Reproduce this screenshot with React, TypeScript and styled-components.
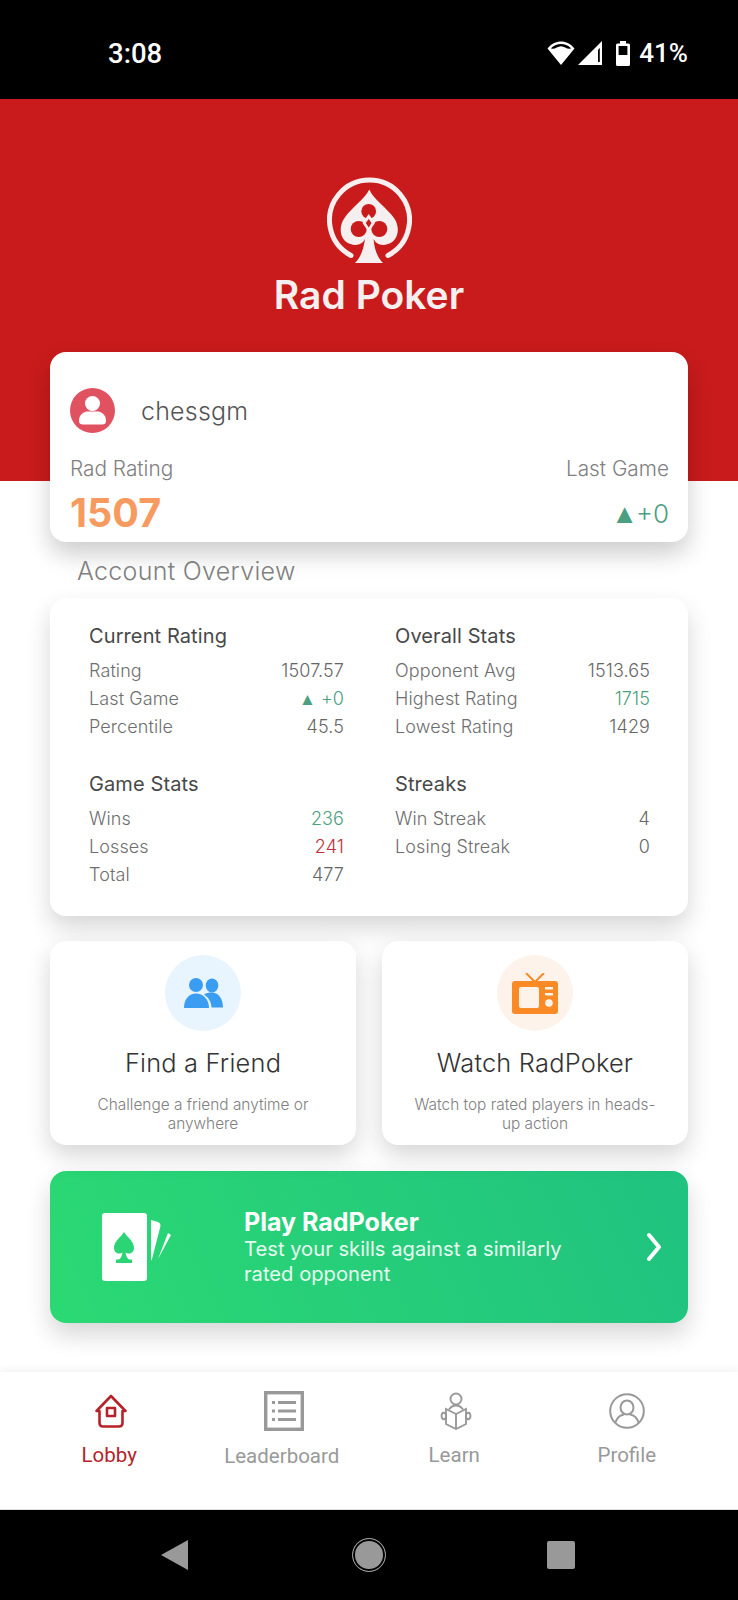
import React from "react";
import styled, { createGlobalStyle } from "styled-components";

const GlobalStyle = createGlobalStyle`
  html, body {
    margin: 0;
    padding: 0;
    background: #fff;
    font-family: Inter, "Liberation Sans", sans-serif;
  }
  * {
    box-sizing: border-box;
  }
`;

const colors = {
  red: "#c91b1c",
  navRed: "#b5232a",
  green: "#4a9f7e",
  lossRed: "#c0303a",
  orange: "#f79a60",
  text: "#555",
  muted: "#808080",
  navGrey: "#999",
};

function WifiIcon() {
  return (
    <svg width="28" height="24" viewBox="0 0 28 24" fill="#fff">
      <path d="M14 24 L0.5 7.5 C4 3 9 0.5 14 0.5 C19 0.5 24 3 27.5 7.5 Z M4 7.3 C7 9.2 10.5 5.2 14 5.2 C17.5 5.2 21 9.2 24 7.3 C21 4 17.5 3 14 3 C10.5 3 7 4 4 7.3 Z" fillRule="evenodd" />
    </svg>
  );
}

function SignalIcon() {
  return (
    <svg width="24" height="24" viewBox="0 0 24 24" fill="#fff">
      <path d="M0 24 L24 0 V24 Z M20 9 V21 H21.8 V6.8 Z" fillRule="evenodd" />
    </svg>
  );
}

function BatteryIcon() {
  return (
    <svg width="14" height="25" viewBox="0 0 14 25" fill="#fff">
      <path d="M4 0 H10 V2.5 H12.5 Q14 2.5 14 4 V23.5 Q14 25 12.5 25 H1.5 Q0 25 0 23.5 V4 Q0 2.5 1.5 2.5 H4 Z M2.6 5 V14 H11.4 V5 Z" fillRule="evenodd" />
    </svg>
  );
}

function LogoMark() {
  return (
    <svg width="85" height="86" viewBox="0 0 85 86">
      <path d="M24 78.5 A40 40 0 1 1 61 78.5" fill="none" stroke="#f5efef" strokeWidth="5" strokeLinecap="round" />
      <path
        d="M42.3 12.5 C46 22 60 31 67 41 C74 51 71 64 61 67 C56 69 52 68 48.5 65 L46.5 62 C47.5 72 50 80 56 86 H28 C34 80 36.5 72 38 62 L36 65 C32.5 68 28 69 23.5 67 C13.5 64 10.5 51 17.5 41 C24 31 38 22 42.3 12.5 Z"
        fill="#f5efef"
      />
      <circle cx="41.7" cy="34.3" r="7.4" fill={colors.red} />
      <circle cx="31.7" cy="52" r="8" fill={colors.red} />
      <circle cx="52.3" cy="52" r="8" fill={colors.red} />
      <path d="M41.7 37 L48 46 L41.7 55 L35.5 46 Z" fill="#f5efef" />
      <path d="M41.7 42 L44.6 46 L41.7 50.5 L38.8 46 Z" fill={colors.red} />
    </svg>
  );
}

function AvatarIcon() {
  return (
    <svg width="45" height="45" viewBox="0 0 45 45">
      <circle cx="22.5" cy="22.5" r="22.5" fill="#e05260" />
      <circle cx="22.5" cy="15.5" r="7.5" fill="#fff" />
      <path d="M9 33 C9 26 14 23.5 18 23.5 H27 C31 23.5 36 26 36 33 C36 35.5 34.5 36.5 32 36.5 H13 C10.5 36.5 9 35.5 9 33 Z" fill="#fff" />
    </svg>
  );
}

function FriendsIcon() {
  return (
    <svg width="39" height="30" viewBox="0 0 39 30" fill="#3a9df2">
      <circle cx="12" cy="7" r="7" />
      <path d="M0 30 C0 21 5 15.5 12 15.5 C19 15.5 25 21 25 30 Z" />
      <ellipse cx="28" cy="7.5" rx="6.3" ry="7" />
      <path d="M20 16.5 C22 15 25 14.5 28 14.5 C34 14.5 39 20 39 29.5 H27.5 C27 23.5 24.5 19.5 20 16.5 Z" />
    </svg>
  );
}

function TvIcon() {
  return (
    <svg width="46" height="41" viewBox="0 0 46 41">
      <path d="M14 0 L23 9 L32 0" fill="none" stroke="#f98a25" strokeWidth="2" />
      <rect x="0" y="8" width="46" height="33" rx="3" fill="#f98a25" />
      <rect x="7" y="14" width="20" height="21" rx="2" fill="#fdf3ea" />
      <rect x="33" y="14" width="8" height="2.5" fill="#fdf3ea" />
      <rect x="33" y="20" width="8" height="2.5" fill="#fdf3ea" />
      <circle cx="37" cy="30" r="3.8" fill="#fdf3ea" />
    </svg>
  );
}

function CardsIcon() {
  return (
    <svg width="70" height="70" viewBox="0 0 70 70">
      <rect x="0" y="1" width="45" height="68" rx="3" fill="#fff" />
      <path d="M22 20 C25 25 32 29 32 36 C32 41 27 43 23.5 40.5 C24 44 25 46 27 47.5 H30 V51 H14 V47.5 H17 C19 46 20 44 20.5 40.5 C17 43 12 41 12 36 C12 29 19 25 22 20 Z" fill="#2bd474" />
      <path d="M49 8 L56 10 C58.5 11 59 13 58 16 L50 47 C49 49 49 49 49 47 Z" fill="#fff" />
      <path d="M66 21 L69 23 L56 47 Z" fill="#fff" />
    </svg>
  );
}

function ChevronIcon() {
  return (
    <svg width="16" height="30" viewBox="0 0 16 30">
      <path d="M3 3 L13 15 L3 27" fill="none" stroke="#fff" strokeWidth="4" strokeLinecap="round" strokeLinejoin="round" />
    </svg>
  );
}

function HomeIcon() {
  return (
    <svg width="36" height="36" viewBox="0 0 36 36" fill="none" stroke={colors.navRed} strokeWidth="2.6" strokeLinejoin="round">
      <path d="M3.5 18 L18 3 L32.5 18 H29.5 V30 Q29.5 33.5 26 33.5 H10 Q6.5 33.5 6.5 30 V18 Z" />
      <rect x="14" y="15" width="8" height="8" />
    </svg>
  );
}

function BoardIcon() {
  return (
    <svg width="40" height="40" viewBox="0 0 40 40" fill="none" stroke={colors.navGrey}>
      <rect x="1.7" y="1.7" width="36.6" height="36.6" strokeWidth="3.4" />
      <g strokeWidth="3">
        <path d="M8 11.5 H11 M14 11.5 H32" />
        <path d="M8 20 H11 M14 20 H32" />
        <path d="M8 28.5 H11 M14 28.5 H32" />
      </g>
    </svg>
  );
}

function LearnIcon() {
  return (
    <svg width="34" height="38" viewBox="0 0 34 38" fill="none" stroke={colors.navGrey} strokeWidth="1.9">
      <circle cx="17" cy="7" r="5.5" />
      <path d="M10 17.5 C12 14.5 14 13.5 17 13.5 C20 13.5 22 14.5 24 17.5" />
      <path d="M17 22 L7 17 V32 L17 37 L27 32 V17 Z" />
      <path d="M17 22 V37" />
      <ellipse cx="4.8" cy="24" rx="2.2" ry="3.2" />
      <ellipse cx="29.2" cy="24" rx="2.2" ry="3.2" />
    </svg>
  );
}

function ProfileIcon() {
  return (
    <svg width="36" height="36" viewBox="0 0 36 36" fill="none" stroke={colors.navGrey} strokeWidth="2">
      <circle cx="18" cy="18" r="16.8" />
      <ellipse cx="18" cy="14.5" rx="6.5" ry="7" />
      <path d="M6.5 29.5 C8 24.5 12 22 15 21.5 M29.5 29.5 C28 24.5 24 22 21 21.5" />
    </svg>
  );
}

type StatTone = "plain" | "up" | "down";

type Stat = {
  label: string;
  value: string;
  tone?: StatTone;
  arrow?: boolean;
};

type StatGroupData = {
  title: string;
  rows: Stat[];
};

const statGroups: StatGroupData[] = [
  {
    title: "Current Rating",
    rows: [
      { label: "Rating", value: "1507.57" },
      { label: "Last Game", value: "+0", tone: "up", arrow: true },
      { label: "Percentile", value: "45.5" },
    ],
  },
  {
    title: "Overall Stats",
    rows: [
      { label: "Opponent Avg", value: "1513.65" },
      { label: "Highest Rating", value: "1715", tone: "up" },
      { label: "Lowest Rating", value: "1429" },
    ],
  },
  {
    title: "Game Stats",
    rows: [
      { label: "Wins", value: "236", tone: "up" },
      { label: "Losses", value: "241", tone: "down" },
      { label: "Total", value: "477" },
    ],
  },
  {
    title: "Streaks",
    rows: [
      { label: "Win Streak", value: "4" },
      { label: "Losing Streak", value: "0" },
    ],
  },
];

const toneColor = (tone?: StatTone) => {
  if (tone === "up") return colors.green;
  if (tone === "down") return colors.lossRed;
  return "#666";
};

function App() {
  return (
    <Page>
      <GlobalStyle />
      <StatusBar>
        <Clock>3:08</Clock>
        <StatusIcons>
          <WifiIcon />
          <SignalIcon />
          <BatterySlot>
            <BatteryIcon />
          </BatterySlot>
          <Percent>41%</Percent>
        </StatusIcons>
      </StatusBar>

      <Hero>
        <LogoMark />
        <Brand>Rad Poker</Brand>
      </Hero>

      <Main>
        <UserCard>
          <UserRow>
            <AvatarIcon />
            <UserName>chessgm</UserName>
          </UserRow>
          <RatingLabels>
            <span>Rad Rating</span>
            <span>Last Game</span>
          </RatingLabels>
          <RatingValues>
            <RatingNumber>1507</RatingNumber>
            <RatingDelta>
              <DeltaArrow>▲</DeltaArrow>+0
            </RatingDelta>
          </RatingValues>
        </UserCard>

        <SectionTitle>Account Overview</SectionTitle>

        <StatsCard>
          {statGroups.map((group) => (
            <StatGroup key={group.title}>
              <StatTitle>{group.title}</StatTitle>
              <StatRows>
                {group.rows.map((row) => (
                  <StatRow key={row.label}>
                    <span>{row.label}</span>
                    <StatValue $tone={row.tone}>
                      {row.arrow && <StatArrow>▲</StatArrow>}
                      {row.value}
                    </StatValue>
                  </StatRow>
                ))}
              </StatRows>
            </StatGroup>
          ))}
        </StatsCard>

        <FeatureGrid>
          <FeatureCard>
            <FeatureBadge $bg="#e9f5fe">
              <FriendsIcon />
            </FeatureBadge>
            <FeatureTitle>Find a Friend</FeatureTitle>
            <FeatureText>Challenge a friend anytime or anywhere</FeatureText>
          </FeatureCard>
          <FeatureCard>
            <FeatureBadge $bg="#fdf3ea">
              <TvIcon />
            </FeatureBadge>
            <FeatureTitle>Watch RadPoker</FeatureTitle>
            <FeatureText>Watch top rated players in heads-up action</FeatureText>
          </FeatureCard>
        </FeatureGrid>

        <PlayCard>
          <CardsIcon />
          <PlayText>
            <PlayTitle>Play RadPoker</PlayTitle>
            <PlaySub>Test your skills against a similarly rated opponent</PlaySub>
          </PlayText>
          <PlayArrow>
            <ChevronIcon />
          </PlayArrow>
        </PlayCard>
      </Main>

      <TabBar>
        <Tab>
          <TabIcon $nudge>
            <HomeIcon />
          </TabIcon>
          <TabLabel $active>Lobby</TabLabel>
        </Tab>
        <Tab>
          <TabIcon $nudge>
            <BoardIcon />
          </TabIcon>
          <TabLabel $drop>Leaderboard</TabLabel>
        </Tab>
        <Tab>
          <TabIcon $nudge>
            <LearnIcon />
          </TabIcon>
          <TabLabel>Learn</TabLabel>
        </Tab>
        <Tab>
          <TabIcon>
            <ProfileIcon />
          </TabIcon>
          <TabLabel>Profile</TabLabel>
        </Tab>
      </TabBar>

      <SystemBar>
        <BackButton />
        <HomeButton />
        <RecentButton />
      </SystemBar>
    </Page>
  );
}

const Page = styled.div`
  display: flex;
  flex-direction: column;
  width: 738px;
  height: 1600px;
  overflow: hidden;
  background: #fff;
`;

const StatusBar = styled.div`
  display: flex;
  justify-content: space-between;
  align-items: center;
  flex-shrink: 0;
  height: 99px;
  padding: 7px 50px 0 108px;
  background: #000;
  color: #fff;
  font-family: Roboto, sans-serif;
  font-weight: 500;
`;

const Clock = styled.span`
  font-size: 27.5px;
`;

const StatusIcons = styled.div`
  display: flex;
  align-items: center;
  gap: 3px;
`;

const BatterySlot = styled.div`
  display: flex;
  margin-left: 11px;
`;

const Percent = styled.span`
  margin-left: 6px;
  font-size: 26px;
`;

const Hero = styled.div`
  display: flex;
  flex-direction: column;
  align-items: center;
  flex-shrink: 0;
  height: 382px;
  padding-top: 78px;
  background: ${colors.red};
`;

const Brand = styled.div`
  margin-top: 10px;
  color: #f5efef;
  font-size: 39px;
  font-weight: 600;
  line-height: 44px;
`;

const Main = styled.div`
  flex: 1;
  margin-top: -129px;
  padding: 0 50px;
  position: relative;
`;

const UserCard = styled.div`
  height: 190px;
  padding: 36px 19px 0 20px;
  border-radius: 16px;
  background: #fff;
  box-shadow: 0 12px 24px rgba(0, 0, 0, 0.2);
`;

const UserRow = styled.div`
  display: flex;
  align-items: center;
  gap: 26px;
  height: 45px;
`;

const UserName = styled.span`
  color: ${colors.text};
  font-size: 25px;
  font-weight: 300;
  letter-spacing: 0.2px;
`;

const RatingLabels = styled.div`
  display: flex;
  justify-content: space-between;
  margin-top: 24px;
  color: ${colors.muted};
  font-size: 20.8px;
  font-weight: 300;
  line-height: 24px;
`;

const RatingValues = styled.div`
  display: flex;
  justify-content: space-between;
  align-items: center;
  margin-top: 9px;
  height: 46px;
`;

const RatingNumber = styled.span`
  color: ${colors.orange};
  font-size: 39.5px;
  font-weight: 700;
`;

const RatingDelta = styled.span`
  color: ${colors.green};
  font-size: 26px;
  font-weight: 300;
`;

const DeltaArrow = styled.span`
  margin-right: -2px;
  font-family: "Liberation Sans", sans-serif;
  font-size: 27px;
  line-height: 0;
`;

const SectionTitle = styled.h2`
  margin: 15px 0 13px 27px;
  color: ${colors.muted};
  font-size: 25px;
  font-weight: 300;
  letter-spacing: 0.3px;
  line-height: 28px;
`;

const StatsCard = styled.div`
  display: grid;
  grid-template-columns: 255px 255px;
  align-content: start;
  column-gap: 51px;
  row-gap: 29px;
  height: 318px;
  padding: 24px 38px 0 39px;
  border-radius: 16px;
  background: #fff;
  box-shadow: 0 12px 24px rgba(0, 0, 0, 0.16);
`;

const StatGroup = styled.div``;

const StatTitle = styled.div`
  color: #484848;
  font-size: 20px;
  font-weight: 400;
  letter-spacing: 0.1px;
  line-height: 28px;
`;

const StatRows = styled.div`
  margin-top: 7px;
`;

const StatRow = styled.div`
  display: flex;
  justify-content: space-between;
  color: #6e6e6e;
  font-size: 18px;
  font-weight: 300;
  letter-spacing: 0.1px;
  line-height: 28px;
`;

const StatValue = styled.span<{ $tone?: StatTone }>`
  color: ${(p) => toneColor(p.$tone)};
`;

const StatArrow = styled.span`
  margin-right: 5px;
  font-family: "Liberation Sans", sans-serif;
  font-size: 17px;
  line-height: 0;
`;

const FeatureGrid = styled.div`
  display: grid;
  grid-template-columns: 1fr 1fr;
  gap: 26px;
  margin-top: 25px;
`;

const FeatureCard = styled.div`
  display: flex;
  flex-direction: column;
  align-items: center;
  height: 204px;
  padding: 14px 25px 0;
  border-radius: 16px;
  background: #fff;
  box-shadow: 0 10px 24px rgba(0, 0, 0, 0.17);
`;

const FeatureBadge = styled.div<{ $bg: string }>`
  display: flex;
  justify-content: center;
  align-items: center;
  width: 76px;
  height: 76px;
  border-radius: 50%;
  background: ${(p) => p.$bg};
`;

const FeatureTitle = styled.div`
  margin-top: 17px;
  color: #333;
  font-size: 25.4px;
  font-weight: 300;
  letter-spacing: 0.2px;
  line-height: 30px;
`;

const FeatureText = styled.div`
  margin-top: 17px;
  color: ${colors.muted};
  font-size: 15.4px;
  font-weight: 300;
  line-height: 19px;
  text-align: center;
`;

const PlayCard = styled.div`
  display: flex;
  align-items: center;
  height: 152px;
  margin-top: 26px;
  padding: 0 26px 0 52px;
  border-radius: 16px;
  background: linear-gradient(65deg, #2bd973, #20c280);
  box-shadow: 0 12px 24px rgba(0, 0, 0, 0.16);
`;

const PlayText = styled.div`
  width: 340px;
  margin-left: 72px;
  color: #fff;
`;

const PlayTitle = styled.div`
  font-size: 25px;
  font-weight: 700;
  line-height: 28px;
`;

const PlaySub = styled.div`
  color: #e8fbf0;
  font-size: 20.2px;
  font-weight: 400;
  line-height: 25.5px;
`;

const PlayArrow = styled.div`
  display: flex;
  margin-left: auto;
`;

const TabBar = styled.nav`
  display: grid;
  grid-template-columns: repeat(4, 1fr);
  position: relative;
  flex-shrink: 0;
  height: 138px;
  padding: 19px 25px 0 23px;
  background: #fff;
  box-shadow: 0 -3px 8px rgba(0, 0, 0, 0.05);
  border-bottom: 1px solid #ddd;
`;

const Tab = styled.div`
  display: flex;
  flex-direction: column;
  align-items: center;
`;

const TabIcon = styled.div<{ $nudge?: boolean }>`
  display: flex;
  justify-content: center;
  align-items: center;
  height: 40px;
  padding-left: ${(p) => (p.$nudge ? "4px" : "0")};
`;

const TabLabel = styled.span<{ $active?: boolean; $drop?: boolean }>`
  margin-top: ${(p) => (p.$drop ? "13px" : "12px")};
  color: ${(p) => (p.$active ? colors.navRed : colors.navGrey)};
  font-family: Roboto, sans-serif;
  font-size: 20.5px;
  line-height: 24px;
`;

const SystemBar = styled.div`
  display: flex;
  align-items: center;
  flex-shrink: 0;
  height: 90px;
  padding: 0 0 0 161px;
  background: #000;
`;

const BackButton = styled.div`
  width: 27px;
  height: 30px;
  background: ${colors.navGrey};
  clip-path: polygon(100% 0, 100% 100%, 0 50%);
`;

const HomeButton = styled.div`
  width: 34px;
  height: 34px;
  margin-left: 164px;
  border: 1.5px solid ${colors.navGrey};
  border-radius: 50%;
  background: ${colors.navGrey};
  box-shadow: inset 0 0 0 2px #000;
`;

const RecentButton = styled.div`
  width: 28px;
  height: 28px;
  margin-left: 161px;
  border-radius: 2px;
  background: ${colors.navGrey};
`;

export default App;
